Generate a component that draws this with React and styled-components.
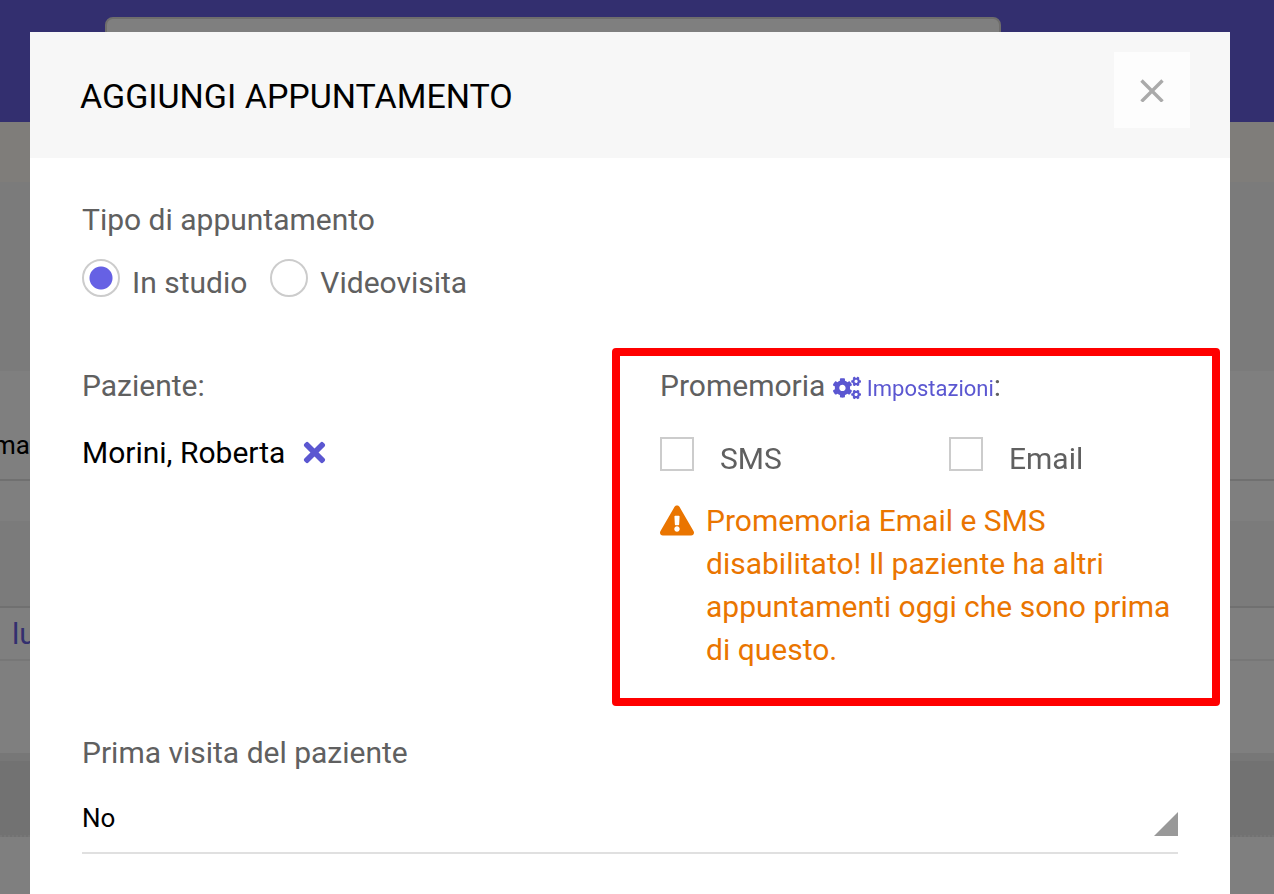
import React from 'react'
import styled, { createGlobalStyle } from 'styled-components'
import { FaCogs, FaExclamationTriangle, FaTimes } from 'react-icons/fa'

const GlobalStyle = createGlobalStyle`
    * {
        box-sizing: border-box;
    }

    body {
        margin: 0;
        overflow: hidden;
        font-family: Roboto, "Liberation Sans", sans-serif;
        font-size: 30px;
        line-height: 43px;
        color: #606060;
        background-color: #fff;
    }
`

const Topbar = styled.header`
    height: 122px;
    padding: 17px 273px 0 105px;
    background-color: #665fde;
`

const Search = styled.input`
    display: block;
    width: 100%;
    height: 76px;
    border: 2px solid #dedcd9;
    border-radius: 8px;
    background-color: #fff;
`

const Band = styled.div`
    display: flex;
    align-items: center;
    height: ${props => props.$height}px;
    background-color: ${props => props.$color || '#fff'};
    border-bottom: ${props => props.$line || 'none'};
`

const Clip = styled.div`
    display: flex;
    justify-content: flex-end;
    width: 30px;
    padding-top: 40px;
    overflow: hidden;
    font-size: 26px;
    color: #000;
`

const DayLink = styled.a`
    padding-left: 12px;
    color: #665fde;
    text-decoration: none;
`

const Overlay = styled.div`
    position: fixed;
    inset: 0;
    overflow: hidden;
    padding: 32px 44px 0 30px;
    background-color: rgba(0, 0, 0, 0.5);
`

const Modal = styled.section`
    min-height: 100vh;
    background-color: #fff;
`

const ModalHeader = styled.div`
    display: flex;
    justify-content: space-between;
    align-items: flex-start;
    height: 126px;
    padding: 20px 40px 0 50px;
    background-color: #f7f7f7;
`

const Title = styled.h1`
    margin: 23px 0 0;
    font-size: 34px;
    font-weight: 400;
    color: #000;
`

const Close = styled.button`
    display: flex;
    align-items: center;
    justify-content: center;
    width: 76px;
    height: 76px;
    padding: 0;
    border: none;
    background-color: #fdfdfd;
    cursor: pointer;
`

const Form = styled.form`
    padding-top: 40px;
`

const TypeField = styled.fieldset`
    margin: 0;
    padding: 0 52px;
    border: none;

    legend {
        padding: 0;
    }
`

const Radios = styled.div`
    display: flex;
    gap: 23px;
    margin-top: 18px;
`

const RadioLabel = styled.label`
    display: flex;
    align-items: flex-start;
    gap: 12px;
    line-height: 47px;
`

const Radio = styled.input`
    appearance: none;
    width: 38px;
    height: 38px;
    margin: 0;
    border: 2px solid #ccc;
    border-radius: 50%;
    background-color: #fff;

    &:checked {
        background-image: radial-gradient(circle, #6661e4 11px, #fff 12px);
    }
`

const Columns = styled.div`
    display: grid;
    grid-template-columns: minmax(0, 530fr) minmax(0, 608fr);
    margin-top: 42px;
    padding: 0 10px 0 52px;
`

const Patient = styled.div`
    padding-top: 16px;
`

const PatientName = styled.div`
    display: flex;
    align-items: center;
    gap: 14px;
    margin-top: 24px;
    color: #000;
`

const Remove = styled.button`
    display: flex;
    padding: 0;
    border: none;
    background: transparent;
    color: #5b57d1;
    cursor: pointer;
`

const Reminder = styled.div`
    padding: 8px 20px 27px 40px;
    border: 8px solid #f00;
    border-radius: 4px;
`

const Settings = styled.a`
    font-size: 22px;
    line-height: 1;
    color: #5b57d1;
    text-decoration: none;

    svg {
        margin-right: 6px;
        font-size: 28px;
        vertical-align: -6px;
    }
`

const Checks = styled.div`
    display: flex;
    margin-top: 30px;
`

const CheckLabel = styled.label`
    display: flex;
    flex: 0 0 289px;
    align-items: flex-start;
    gap: 26px;
`

const Checkbox = styled.input`
    appearance: none;
    width: 34px;
    height: 34px;
    margin: 0;
    border: 2px solid #ccc;
    background-color: #fff;
`

const Warning = styled.p`
    display: flex;
    gap: 12px;
    margin: 19px 0 0;
    color: #ea7500;

    svg {
        flex: none;
        width: 34px;
        height: 43px;
    }
`

const FirstVisit = styled.div`
    padding: 25px 52px 0;

    label {
        display: block;
    }
`

const Select = styled.select`
    appearance: none;
    display: block;
    width: 100%;
    height: 70px;
    margin-top: 10px;
    padding: 0;
    border: none;
    border-bottom: 2px solid #e0e0e0;
    border-radius: 0;
    background: linear-gradient(135deg, transparent 49%, #999 51%) right 0 bottom 16px / 24px 24px no-repeat;
    font-family: inherit;
    font-size: 26px;
    color: #000;
`

const Background = () => (
    <div>
        <Topbar>
            <Search type='search' aria-label='Cerca' />
        </Topbar>
        <Band $height={60} $color='#fefbf5' />
        <Band $height={189} $color='#f7f7f7' />
        <Band $height={110} $line='2px solid #e0e0e0'>
            <Clip>ma</Clip>
        </Band>
        <Band $height={40} />
        <Band $height={87} $color='#f7f7f7' $line='2px solid #e0e0e0' />
        <Band $height={53} $line='2px solid #eee'>
            <DayLink href='#lu'>lu</DayLink>
        </Band>
        <Band $height={92} />
        <Band $height={8} $color='#eee' />
        <Band $height={76} $color='#e4e4e4' $line='2px dotted #eee' />
        <Band $height={80} />
    </div>
)

const App = () => {
    return (
        <>
            <GlobalStyle />
            <Background />
            <Overlay>
                <Modal role='dialog' aria-labelledby='title'>
                    <ModalHeader>
                        <Title id='title'>AGGIUNGI APPUNTAMENTO</Title>
                        <Close type='button' aria-label='Chiudi'>
                            <svg width='24' height='24' viewBox='0 0 24 24' stroke='#aaa' strokeWidth='3.4'>
                                <path d='M1.5 2.5l21 21M22.5 2.5l-21 21' />
                            </svg>
                        </Close>
                    </ModalHeader>
                    <Form>
                        <TypeField>
                            <legend>Tipo di appuntamento</legend>
                            <Radios>
                                <RadioLabel>
                                    <Radio type='radio' name='type' defaultChecked />
                                    In studio
                                </RadioLabel>
                                <RadioLabel>
                                    <Radio type='radio' name='type' />
                                    Videovisita
                                </RadioLabel>
                            </Radios>
                        </TypeField>
                        <Columns>
                            <Patient>
                                <div>Paziente:</div>
                                <PatientName>
                                    Morini, Roberta
                                    <Remove type='button' aria-label='Rimuovi'>
                                        <FaTimes size={31} />
                                    </Remove>
                                </PatientName>
                            </Patient>
                            <Reminder>
                                <div>
                                    Promemoria <Settings href='#impostazioni'><FaCogs />Impostazioni</Settings>:
                                </div>
                                <Checks>
                                    <CheckLabel>
                                        <Checkbox type='checkbox' />
                                        SMS
                                    </CheckLabel>
                                    <CheckLabel>
                                        <Checkbox type='checkbox' />
                                        Email
                                    </CheckLabel>
                                </Checks>
                                <Warning>
                                    <FaExclamationTriangle />
                                    <span>
                                        Promemoria Email e SMS disabilitato! Il paziente ha altri appuntamenti oggi che sono prima di questo.
                                    </span>
                                </Warning>
                            </Reminder>
                        </Columns>
                        <FirstVisit>
                            <label htmlFor='first'>Prima visita del paziente</label>
                            <Select id='first' defaultValue='No'>
                                <option>No</option>
                                <option>Sì</option>
                            </Select>
                        </FirstVisit>
                    </Form>
                </Modal>
            </Overlay>
        </>
    )
}

export default App
